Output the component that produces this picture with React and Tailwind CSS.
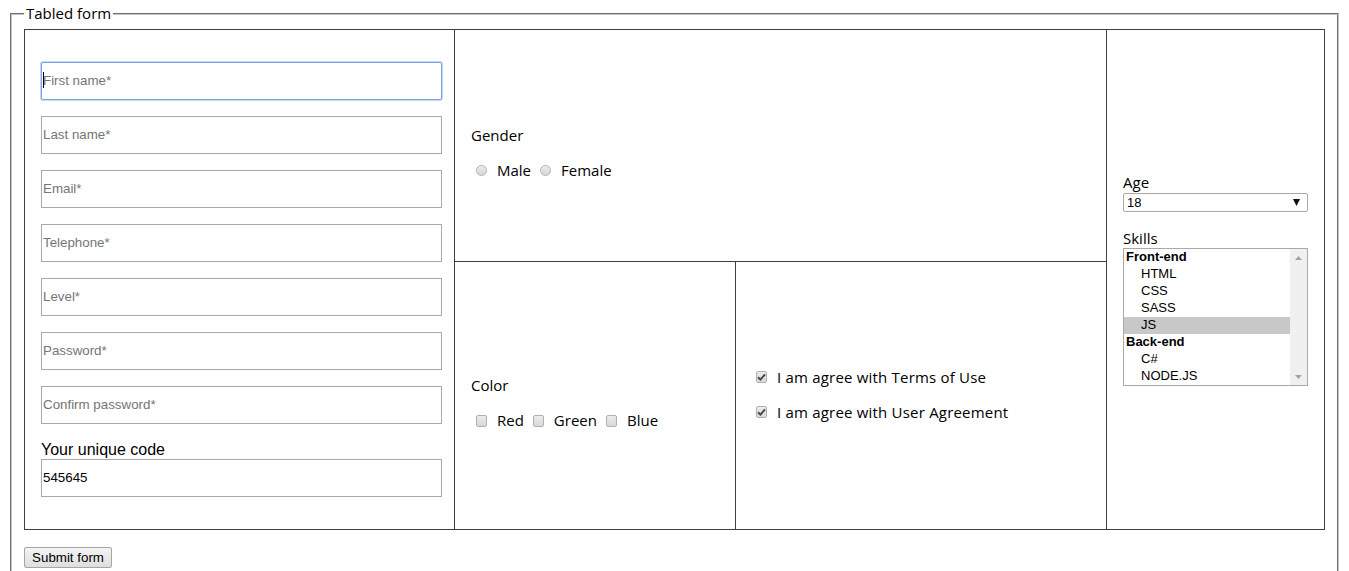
import React from "react";

const seg = "font-['Open_Sans',sans-serif] text-[15px] text-black";
const arial = "font-['Liberation_Sans',Arial,sans-serif]";

function TextInput({ placeholder, value, focused }) {
  return (
    <div className="relative w-[401px] h-[38px]">
      <input
        readOnly
        placeholder={placeholder}
        defaultValue={value}
        className={`${arial} block w-full h-full pl-[1px] pr-[2px] pb-[2px] text-[13.33px] text-black bg-white outline-none placeholder:text-[#757575] ${
          focused
            ? "border border-[#7ba2e8] rounded-[2px] shadow-[0_0_0_1px_#c7d8f6]"
            : "border border-[#a9a9a9]"
        }`}
      />
      {focused && (
        <span className="absolute left-[2px] top-[10px] w-[1px] h-[16px] bg-black" />
      )}
    </div>
  );
}

function Radio() {
  return (
    <span className="inline-block w-[11px] h-[11px] rounded-full border border-[#b3b3b3] bg-gradient-to-b from-[#ececec] to-[#d6d6d6]" />
  );
}

function Box({ checked }) {
  return (
    <span className="inline-flex items-center justify-center w-[11px] h-[12px] rounded-[2px] border border-[#b0b0b0] bg-gradient-to-b from-[#ececec] to-[#d8d8d8]">
      {checked && (
        <svg width="9" height="8" viewBox="0 0 9 8">
          <path d="M1 4.2 L3.4 6.6 L8 1.4" stroke="#4a4a4a" strokeWidth="2" fill="none" />
        </svg>
      )}
    </span>
  );
}

function Triangle({ up, color = "#a3a3a3", w = 7, h = 4 }) {
  return (
    <svg width={w} height={h} viewBox={`0 0 ${w} ${h}`}>
      <path d={up ? `M0 ${h} L${w / 2} 0 L${w} ${h} Z` : `M0 0 L${w} 0 L${w / 2} ${h} Z`} fill={color} />
    </svg>
  );
}

export default function App() {
  const inputs = [
    "First name*",
    "Last name*",
    "Email*",
    "Telephone*",
    "Level*",
    "Password*",
    "Confirm password*",
  ];
  const skills = [
    { t: "Front-end", g: true },
    { t: "HTML" },
    { t: "CSS" },
    { t: "SASS" },
    { t: "JS", sel: true },
    { t: "Back-end", g: true },
    { t: "C#" },
    { t: "NODE.JS" },
  ];
  return (
    <div className="bg-white px-[10px] pt-[4px] w-[1349px] h-[571px] overflow-hidden">
      <fieldset className="border-2 [border-style:groove] border-[#c4c4c4] px-[12px] pt-[6px] pb-[20px] min-w-0">
        <legend className={`${seg} px-[2px] leading-[19px]`}>Tabled form</legend>

        <div className="grid grid-cols-[430px_281px_371px_217px] grid-rows-[232px_267px] border border-[#3f3f3f] w-[1301px]">
          {/* left cell */}
          <div className="row-span-2 border-r border-[#3f3f3f] flex flex-col justify-center pl-4">
            <div className="flex flex-col gap-4">
              {inputs.map((p, i) => (
                <TextInput key={p} placeholder={p} focused={i === 0} />
              ))}
            </div>
            <label className={`${arial} mt-4 text-[16px] leading-[19px] text-black`}>
              Your unique code
            </label>
            <TextInput value="545645" />
          </div>

          {/* gender */}
          <div className={`${seg} col-span-2 border-r border-b border-[#3f3f3f] flex flex-col justify-center pl-4 pt-[14px]`}>
            <div className="leading-[21px]">Gender</div>
            <div className="mt-[14px] h-[20px] leading-[20px] flex items-center">
              <span className="ml-[5px] mt-[1px] flex"><Radio /></span>
              <span className="ml-[10px]">Male</span>
              <span className="ml-[9px] mt-[1px] flex"><Radio /></span>
              <span className="ml-[10px]">Female</span>
            </div>
          </div>

          {/* right cell */}
          <div className="row-span-2 col-start-4 row-start-1 flex flex-col justify-center pl-4">
            <div className={`${seg} leading-[19px]`}>Age</div>
            <div className={`${arial} mt-[1px] w-[185px] h-[19px] border border-[#a9a9a9] rounded-[2px] flex items-center justify-between pl-[3px] pr-[7px] text-[13px] text-black`}>
              <span>18</span>
              <Triangle color="#111" w={7} h={7} />
            </div>
            <div className={`${seg} mt-[17px] leading-[19px]`}>Skills</div>
            <div className={`${arial} w-[185px] h-[138px] border border-[#a9a9a9] flex text-[13px] text-black`}>
              <div className="flex-1 flex flex-col">
                {skills.map((s) => (
                  <div
                    key={s.t}
                    className={`h-[17px] leading-[16px] ${s.g ? "font-bold pl-[2px]" : "pl-[17px]"} ${
                      s.sel ? "bg-[#c8c8c8]" : ""
                    }`}
                  >
                    {s.t}
                  </div>
                ))}
              </div>
              <div className="w-[17px] bg-[#f0f0f0] flex flex-col items-center justify-between pt-[7px] pb-[6px]">
                <Triangle up />
                <Triangle />
              </div>
            </div>
          </div>

          {/* color */}
          <div className={`${seg} col-start-2 row-start-2 border-r border-[#3f3f3f] flex flex-col justify-center pl-4 pt-[14px]`}>
            <div className="leading-[21px]">Color</div>
            <div className="mt-[14px] h-[20px] leading-[20px] flex items-center">
              <span className="ml-[5px] mt-[1px] flex"><Box /></span>
              <span className="ml-[10px]">Red</span>
              <span className="ml-[9px] mt-[1px] flex"><Box /></span>
              <span className="ml-[10px]">Green</span>
              <span className="ml-[9px] mt-[1px] flex"><Box /></span>
              <span className="ml-[10px]">Blue</span>
            </div>
          </div>

          {/* agree */}
          <div className={`${seg} col-start-3 row-start-2 border-r border-[#3f3f3f] flex flex-col justify-center pl-4 pb-[3px]`}>
            <div className="h-[20px] leading-[20px] flex items-center">
              <span className="ml-[4px] mt-[1px] flex"><Box checked /></span>
              <span className="ml-[10px] tracking-[0.2px]">I am agree with Terms of Use</span>
            </div>
            <div className="mt-[15px] h-[20px] leading-[20px] flex items-center">
              <span className="ml-[4px] mt-[1px] flex"><Box checked /></span>
              <span className="ml-[10px] tracking-[0.2px]">I am agree with User Agreement</span>
            </div>
          </div>
        </div>

        <button
          className={`${arial} mt-[17px] block w-[88px] h-[21px] border border-[#a6a6a6] rounded-[2px] bg-gradient-to-b from-[#f4f4f4] to-[#dedede] text-[13.33px] text-black leading-[19px]`}
        >
          Submit form
        </button>
      </fieldset>
    </div>
  );
}
